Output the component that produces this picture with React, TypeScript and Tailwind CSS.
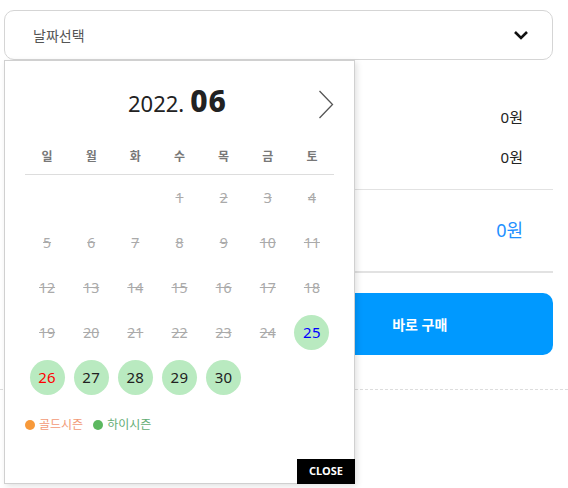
import React from "react";

const weekdays = ["일", "월", "화", "수", "목", "금", "토"];

// June 2022 starts on Wednesday
const offset = 3;
const days = Array.from({ length: 30 }, (_, i) => i + 1);
const openFrom = 25;

function DayCell({ day }: { day: number }) {
  const open = day >= openFrom;
  if (!open) {
    return (
      <div className="h-[45px] flex items-center justify-center">
        <span className="text-[14px] text-[#aaaaaa] line-through">{day}</span>
      </div>
    );
  }
  const col = (day + offset - 1) % 7;
  const color = col === 0 ? "text-[#ff0000]" : col === 6 ? "text-[#0000ff]" : "text-[#222222]";
  return (
    <div className="h-[45px] flex items-center justify-center">
      <span
        className={`w-[35px] h-[35px] rounded-full bg-[#b9eac0] flex items-center justify-center text-[15px] font-normal tracking-[0.3px] ${color}`}
      >
        {day}
      </span>
    </div>
  );
}

export default function App() {
  return (
    <div
      className="relative w-[568px] h-[488px] bg-white overflow-hidden"
      style={{ fontFamily: '"Noto Sans", "Noto Sans CJK KR", sans-serif' }}
    >
      <div className="pt-[10px] pl-[4px] pr-[15px]">
        {/* date select */}
        <div className="h-[50px] border border-[#d5d5d5] rounded-[10px] flex items-center justify-between pl-[28px] pr-[23px]">
          <span className="text-[14px] text-[#555555]">날짜선택</span>
          <svg width="16" height="10" viewBox="0 0 16 10">
            <polyline points="2,2 8,8 14,2" fill="none" stroke="#111" strokeWidth="2.6" />
          </svg>
        </div>

        {/* price summary (labels sit under the calendar) */}
        <div className="mt-[47px] flex flex-col gap-[20px] pr-[30px] text-[15px] leading-[20px] text-[#222222]">
          <div className="flex justify-end">
            <span>0원</span>
          </div>
          <div className="flex justify-end">
            <span>0원</span>
          </div>
        </div>
        <div className="mt-[22px] border-t border-[#e2e2e2]" />
        <div className="pt-[28px] pr-[30px] flex justify-end text-[18px] leading-[24px]">
          <span className="text-[#1e90ff]">0원</span>
        </div>
        <div className="mt-[29px] border-t-2 border-[#e2e2e2]" />

        <div className="mt-[20px] grid grid-cols-2 gap-[16px]">
          <div className="h-[62px] rounded-[10px] border border-[#0099ff]" />
          <button className="h-[62px] rounded-[10px] bg-[#0099ff] text-white text-[14px] font-bold">
            바로 구매
          </button>
        </div>
      </div>
      <div className="mt-[34px] border-t border-dashed border-[#dddddd]" />

      {/* calendar popup */}
      <div className="absolute left-[4px] top-[60px] w-[351px] h-[424px] bg-white border border-[#d0d0d0] shadow-[2px_2px_6px_rgba(0,0,0,0.12)] px-[20px]">
        <div className="relative h-[78px] flex items-center justify-center">
          <div className="flex items-baseline gap-[6px] text-[#222222] mr-[4px]">
            <span className="text-[22px] font-normal">2022.</span>
            <span className="text-[30px] font-extrabold tracking-[1px]">06</span>
          </div>
          <svg
            className="absolute right-[0px] top-[29px]"
            width="16"
            height="29"
            viewBox="0 0 16 29"
          >
            <polyline points="1.5,1 14.5,14.5 1.5,28" fill="none" stroke="#555" strokeWidth="1.3" />
          </svg>
        </div>

        <div className="h-[36px] grid grid-cols-7 items-center border-b border-[#dddddd]">
          {weekdays.map((w) => (
            <span key={w} className="text-center text-[12px] font-bold text-[#777777]">
              {w}
            </span>
          ))}
        </div>

        <div className="grid grid-cols-7">
          {Array.from({ length: offset }, (_, i) => (
            <div key={`e${i}`} className="h-[45px]" />
          ))}
          {days.map((d) => (
            <DayCell key={d} day={d} />
          ))}
        </div>

        <div className="mt-[16px] flex items-center gap-[10px] text-[12px] leading-[18px]">
          <div className="flex items-center gap-[4px]">
            <span className="w-[10px] h-[10px] rounded-full bg-[#f7993a]" />
            <span className="text-[#f29a76]">골드시즌</span>
          </div>
          <div className="flex items-center gap-[4px]">
            <span className="w-[10px] h-[10px] rounded-full bg-[#5cb860]" />
            <span className="text-[#63ad73]">하이시즌</span>
          </div>
        </div>

        <button className="absolute right-[-1px] bottom-[-1px] w-[58px] h-[25px] bg-black text-white text-[11px] font-bold flex items-center justify-center">
          CLOSE
        </button>
      </div>
    </div>
  );
}
